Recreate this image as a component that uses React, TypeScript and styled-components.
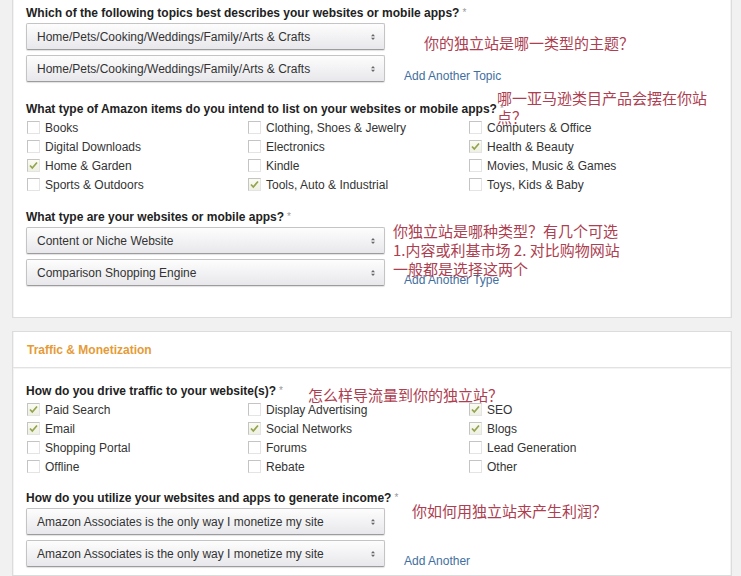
import React from "react";
import styled, { createGlobalStyle } from "styled-components";

const GlobalStyle = createGlobalStyle`
  html, body { margin: 0; padding: 0; background: #f1f1f1; }
  body {
    font-family: "Liberation Sans", Arial, sans-serif;
    font-size: 12px;
    color: #333;
  }
`;

const Page = styled.div`
  display: flex;
  flex-direction: column;
  gap: 13px;
  padding: 0 9px 8px 12px;
`;

const Panel = styled.section<{ $cutTop?: boolean }>`
  position: relative;
  background: #fff;
  border: 1px solid #dcdcdc;
  border-top: ${(p) => (p.$cutTop ? "none" : "1px solid #dcdcdc")};
  box-shadow: inset 1px 0 0 #f3f3f3, inset -1px 0 0 #f3f3f3;
`;

const PanelHeader = styled.div`
  height: 36px;
  display: flex;
  align-items: center;
  padding-left: 14px;
  padding-top: 1px;
  box-sizing: border-box;
  border-bottom: 1px solid #e2e2e2;
  box-shadow: 0 1px 0 #f4f4f4;
  font-weight: bold;
  font-size: 12px;
  color: #e59b37;
`;

const PanelBody = styled.div<{ $top: number; $bottom: number }>`
  display: flex;
  flex-direction: column;
  padding: ${(p) => p.$top}px 13px ${(p) => p.$bottom}px 13px;
`;

const Field = styled.div<{ $space?: number }>`
  margin-top: ${(p) => p.$space ?? 0}px;
`;

const Question = styled.div`
  font-weight: bold;
  color: #222;
  line-height: 16px;
  margin-bottom: 2px;
`;

const Req = styled.span`
  color: #999;
  font-weight: normal;
  font-size: 10px;
  vertical-align: top;
  margin-left: 3px;
`;

const SelectStack = styled.div`
  display: flex;
  flex-direction: column;
  gap: 5px;
`;

const SelectRow = styled.div`
  display: flex;
  align-items: flex-end;
`;

const Select = styled.div`
  box-sizing: border-box;
  width: 359px;
  height: 27px;
  display: flex;
  align-items: center;
  justify-content: space-between;
  padding: 0 8px 0 10px;
  border: 1px solid #c4c4c4;
  border-bottom-color: #9c9c9c;
  border-radius: 2px;
  background: linear-gradient(#fdfdfd, #e8e8ec);
  box-shadow: 0 1px 1px rgba(0, 0, 0, 0.12);
  color: #333;
  font-size: 12px;
`;

const AddLink = styled.a`
  margin-left: 19px;
  margin-bottom: -1px;
  line-height: 14px;
  color: #3f6fa0;
  font-size: 12px;
  text-decoration: none;
`;

const CheckGrid = styled.div`
  display: grid;
  grid-template-columns: 221px 221px 221px;
  grid-auto-rows: 19px;
  margin-top: -1px;
`;

const CheckItem = styled.label`
  display: flex;
  align-items: center;
  gap: 5px;
  padding-left: 1px;
  color: #333;
  font-size: 12px;
  white-space: nowrap;
`;

const Box = styled.span<{ $checked?: boolean }>`
  box-sizing: border-box;
  width: 13px;
  height: 13px;
  display: inline-flex;
  align-items: center;
  justify-content: center;
  border: 1px solid #c4c4c4;
  border-right-color: #e4e4e4;
  border-bottom-color: #e4e4e4;
  background: ${(p) => (p.$checked ? "linear-gradient(#fbfbf2, #eef0e2)" : "#fff")};
`;

const Note = styled.div<{ $x: number; $y: number }>`
  position: absolute;
  left: ${(p) => p.$x}px;
  top: ${(p) => p.$y}px;
  font-family: "Noto Sans CJK SC", "Liberation Sans", sans-serif;
  font-size: 15px;
  line-height: 19px;
  color: #ad4050;
  white-space: nowrap;
  pointer-events: none;
`;

const Arrows = () => (
  <svg width="6" height="8" viewBox="0 0 6 8">
    <path d="M1 3.2 L3 1 L5 3.2 Z" fill="#666" />
    <path d="M1 4.8 L3 7 L5 4.8 Z" fill="#666" />
  </svg>
);

const Check = () => (
  <svg width="11" height="11" viewBox="0 0 11 11">
    <polyline points="2,5.5 4.3,8 9,2.5" fill="none" stroke="#93a34e" strokeWidth="1.7" />
  </svg>
);

type Opt = { label: string; checked?: boolean };

const Checks = ({ items }: { items: Opt[] }) => (
  <CheckGrid>
    {items.map((it) => (
      <CheckItem key={it.label}>
        <Box $checked={it.checked}>{it.checked && <Check />}</Box>
        {it.label}
      </CheckItem>
    ))}
  </CheckGrid>
);

const Selects = ({ values, link }: { values: string[]; link: string }) => (
  <SelectStack>
    {values.map((v, i) => (
      <SelectRow key={i}>
        <Select>
          <span>{v}</span>
          <Arrows />
        </Select>
        {i === values.length - 1 && <AddLink href="#">{link}</AddLink>}
      </SelectRow>
    ))}
  </SelectStack>
);

const amazonItems: Opt[] = [
  { label: "Books" },
  { label: "Clothing, Shoes & Jewelry" },
  { label: "Computers & Office" },
  { label: "Digital Downloads" },
  { label: "Electronics" },
  { label: "Health & Beauty", checked: true },
  { label: "Home & Garden", checked: true },
  { label: "Kindle" },
  { label: "Movies, Music & Games" },
  { label: "Sports & Outdoors" },
  { label: "Tools, Auto & Industrial", checked: true },
  { label: "Toys, Kids & Baby" },
];

const trafficItems: Opt[] = [
  { label: "Paid Search", checked: true },
  { label: "Display Advertising" },
  { label: "SEO", checked: true },
  { label: "Email", checked: true },
  { label: "Social Networks", checked: true },
  { label: "Blogs", checked: true },
  { label: "Shopping Portal" },
  { label: "Forums" },
  { label: "Lead Generation" },
  { label: "Offline" },
  { label: "Rebate" },
  { label: "Other" },
];

export default function App() {
  const topic = "Home/Pets/Cooking/Weddings/Family/Arts & Crafts";
  const income = "Amazon Associates is the only way I monetize my site";
  return (
    <>
      <GlobalStyle />
      <Page>
        <Panel $cutTop>
          <PanelBody $top={5} $bottom={31}>
            <Field>
              <Question>
                Which of the following topics best describes your websites or mobile apps?<Req>*</Req>
              </Question>
              <Selects values={[topic, topic]} link="Add Another Topic" />
            </Field>
            <Field $space={19}>
              <Question>
                What type of Amazon items do you intend to list on your websites or mobile apps?<Req>*</Req>
              </Question>
              <Checks items={amazonItems} />
            </Field>
            <Field $space={15}>
              <Question>
                What type are your websites or mobile apps?<Req>*</Req>
              </Question>
              <Selects
                values={["Content or Niche Website", "Comparison Shopping Engine"]}
                link="Add Another Type"
              />
            </Field>
          </PanelBody>
          <Note $x={411} $y={33}>你的独立站是哪一类型的主题？</Note>
          <Note $x={484} $y={88}>
            哪一亚马逊类目产品会摆在你站
            <br />
            点？
          </Note>
          <Note $x={380} $y={221}>
            你独立站是哪种类型？有几个可选
            <br />
            1.内容或利基市场 2. 对比购物网站
            <br />
            一般都是选择这两个
          </Note>
        </Panel>
        <Panel>
          <PanelHeader>Traffic &amp; Monetization</PanelHeader>
          <PanelBody $top={15} $bottom={8}>
            <Field>
              <Question>
                How do you drive traffic to your website(s)?<Req>*</Req>
              </Question>
              <Checks items={trafficItems} />
            </Field>
            <Field $space={14}>
              <Question>
                How do you utilize your websites and apps to generate income?<Req>*</Req>
              </Question>
              <Selects values={[income, income]} link="Add Another" />
            </Field>
          </PanelBody>
          <Note $x={295} $y={53}>怎么样导流量到你的独立站？</Note>
          <Note $x={399} $y={169}>你如何用独立站来产生利润？</Note>
        </Panel>
      </Page>
    </>
  );
}
